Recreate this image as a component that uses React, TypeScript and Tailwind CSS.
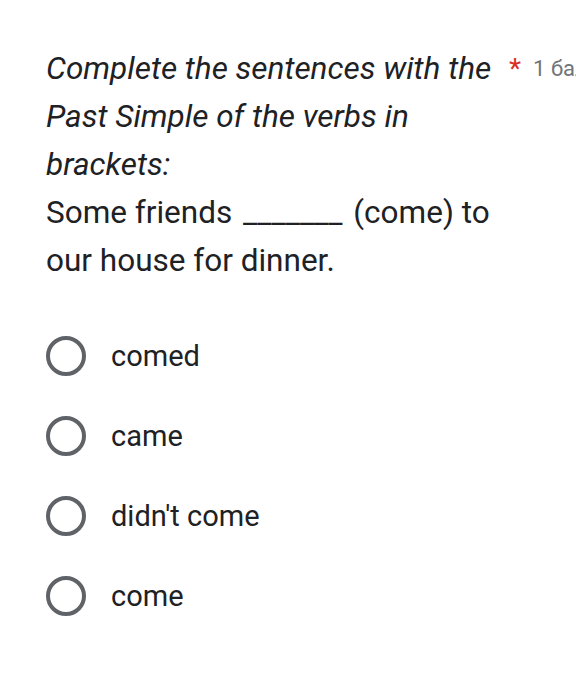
const options = ["comed", "came", "didn't come", "come"]

function Radio() {
  return (
    <div className="h-10 w-10 shrink-0 rounded-full border-4 border-[#5f6368]" />
  )
}

export default function App() {
  return (
    <div
      className="h-[683px] w-[576px] overflow-hidden bg-white"
      style={{ fontFamily: "Roboto, 'Noto Sans', sans-serif" }}
    >
      <div className="pl-[46px] pt-[45px]">
        <div className="flex items-start whitespace-nowrap">
          <div className="w-[462px] shrink-0 whitespace-normal text-[31.5px] leading-[48px] text-[#202124]">
            <span className="italic">
              Complete the sentences with the Past Simple of the verbs in brackets:
            </span>
            <br />
            Some friends <span className="ml-[3px] mr-[3px]">_______</span> (come) to our house for dinner.
          </div>
          <span className="ml-[1px] text-[28px] leading-[48px] text-[#d93025]">*</span>
          <span className="ml-[12px] text-[22px] leading-[48px] text-[#70757a]">1 бал</span>
        </div>

        <div className="mt-[51px] flex flex-col gap-10">
          {options.map((o) => (
            <div key={o} className="flex items-center gap-[25px]">
              <Radio />
              <span className="text-[29px] leading-10 text-[#202124]">{o}</span>
            </div>
          ))}
        </div>
      </div>
    </div>
  )
}
